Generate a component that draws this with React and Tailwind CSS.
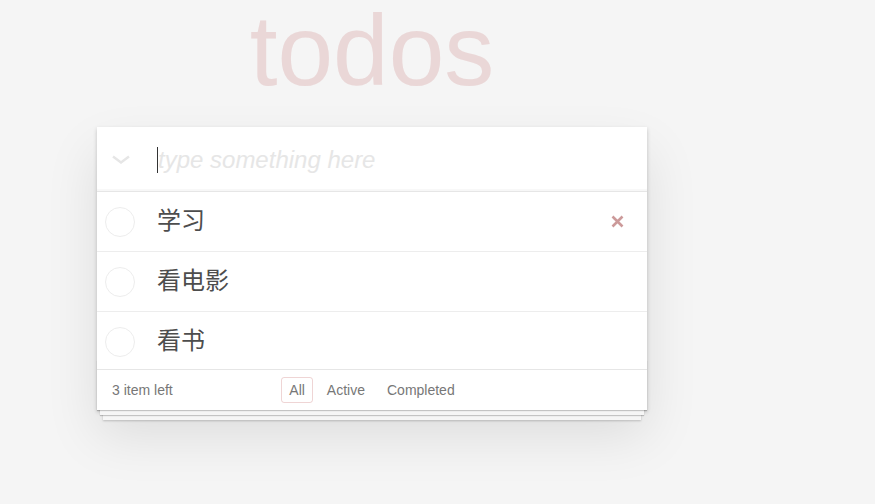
import { useState } from "react";

const initialTodos = [
  { id: 1, title: "学习" },
  { id: 2, title: "看电影" },
  { id: 3, title: "看书" },
];

const filters = ["All", "Active", "Completed"];

function TodoItem({ todo, showDelete }) {
  return (
    <li className="flex items-center h-[60px] border-b border-[#ededed] bg-white">
      <span className="ml-[8px] w-[30px] h-[30px] shrink-0 rounded-full border border-[#ededed]" />
      <label className="ml-[22px] text-[24px] leading-[1.2] text-[#4d4d4d]">
        {todo.title}
      </label>
      {showDelete && (
        <button className="ml-auto mr-[23px] w-[14px] h-[14px] flex items-center justify-center">
          <svg width="13" height="13" viewBox="0 0 13 13">
            <path
              d="M1.5 1.5 L11.5 11.5 M11.5 1.5 L1.5 11.5"
              stroke="#cc9a9a"
              strokeWidth="2.6"
              strokeLinecap="butt"
            />
          </svg>
        </button>
      )}
    </li>
  );
}

export default function App() {
  const [todos] = useState(initialTodos);
  const [filter, setFilter] = useState("All");

  return (
    <div className="min-h-[504px] bg-[#f5f5f5] font-['Liberation_Sans','Noto_Sans_CJK_SC',Arial,sans-serif]">
      <div className="ml-[97px] w-[550px]">
        <h1 className="h-[100px] text-center text-[100px] leading-[100px] font-thin text-[#ead7d7]">
          todos
        </h1>

        <section className="mt-[27px] bg-white shadow-[0_2px_4px_0_rgba(0,0,0,0.2),0_25px_50px_0_rgba(0,0,0,0.1)]">
          {/* new todo */}
          <div className="flex items-center h-[65px] pt-[2px] border-b border-[#e6e6e6] shadow-[inset_0_-2px_1px_rgba(0,0,0,0.03)]">
            <div className="w-[60px] h-full flex items-center pl-[14px]">
              <svg width="20" height="10" viewBox="0 0 20 10">
                <path
                  d="M2 1.5 L10 7.5 L18 1.5"
                  fill="none"
                  stroke="#e6e6e6"
                  strokeWidth="2.4"
                />
              </svg>
            </div>
            <span className="w-px h-[26px] bg-[#333]" />
            <span className="text-[24px] italic text-[#e6e6e6] leading-none">
              type something here
            </span>
          </div>

          {/* list */}
          <ul>
            <TodoItem todo={todos[0]} showDelete />
            <TodoItem todo={todos[1]} />
            <div className="h-[48px] overflow-hidden">
              <TodoItem todo={todos[2]} />
            </div>
          </ul>

          {/* footer */}
          <div className="bg-white shadow-[0_1px_1px_rgba(0,0,0,0.2),0_8px_0_-3px_#f6f6f6,0_9px_1px_-3px_rgba(0,0,0,0.2),0_16px_0_-6px_#f6f6f6,0_17px_2px_-6px_rgba(0,0,0,0.2)]">
            <div className="h-[9px]" />
            <footer className="grid grid-cols-[1fr_auto_1fr] items-center h-[41px] px-[15px] border-t border-[#e6e6e6] text-[14px] leading-[20px] text-[#777]">
              <span>{todos.length} item left</span>
              <ul className="flex">
                {filters.map((f) => (
                  <li key={f}>
                    <a
                      onClick={() => setFilter(f)}
                      className={
                        "block m-[3px] px-[7px] py-[2px] rounded-[3px] border cursor-pointer " +
                        (filter === f
                          ? "border-[rgba(175,47,47,0.2)]"
                          : "border-transparent")
                      }
                    >
                      {f}
                    </a>
                  </li>
                ))}
              </ul>
              <span />
            </footer>
          </div>
        </section>
      </div>
    </div>
  );
}
